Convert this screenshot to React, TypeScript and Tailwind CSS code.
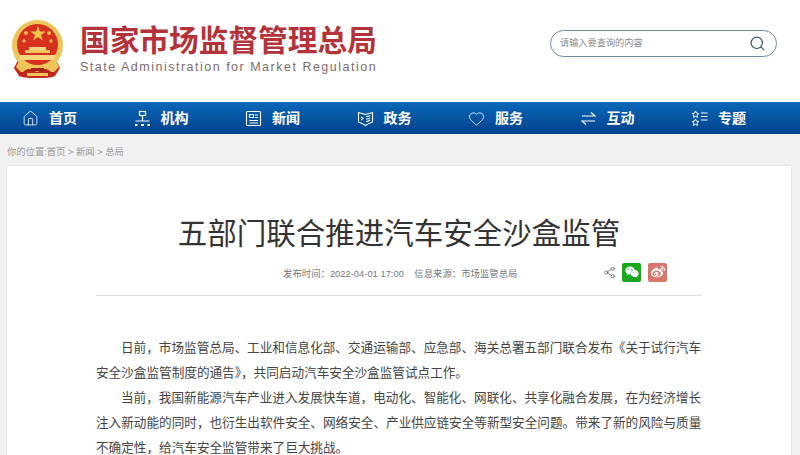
import React from 'react';
import { Home, Heart, Search, Share2 } from 'lucide-react';
import { FaWeixin, FaWeibo } from 'react-icons/fa';

const OrgIcon = () => (
  <svg width="17" height="17" viewBox="0 0 17 17" fill="none" stroke="currentColor" strokeWidth="1.2">
    <rect x="5.500" y="1.500" width="6" height="4" />
    <path d="M8.500 5.500V11M1.500 11h14" />
    <path d="M1 15h2.500M7 15h3M13.500 15H16" strokeWidth="2" />
  </svg>
);

const NewsIcon = () => (
  <svg width="17" height="17" viewBox="0 0 17 17" fill="none" stroke="currentColor" strokeWidth="1.100">
    <rect x="1.500" y="1.500" width="14" height="14" rx="1" />
    <path d="M4.500 4.500h4v3h-4zM10 5h3M10 7.500h3M4.500 10.500h8.500M4.500 13h8.500" />
  </svg>
);

const BookIcon = () => (
  <svg width="17" height="17" viewBox="0 0 17 17" fill="none" stroke="currentColor" strokeWidth="1.100">
    <path d="M1.500 2.500C4 3.500 6 3.500 8.500 4.500 11 3.500 13 3.500 15.500 2.500V12c-2.500 1-5 2-7 3.500-2-1.500-4.500-2.500-7-3.500z" />
    <path d="M9 6.500c1.500 0 3 0 4-1M9 9c1.500 0 3 0 4-1M9 11.500c1.500 0 3-.5 4-1.500M4 7l2 1.500L4 10" />
  </svg>
);

const SwapIcon = () => (
  <svg width="17" height="17" viewBox="0 0 17 17" fill="none" stroke="currentColor" strokeWidth="1.100">
    <path d="M2 6h13L11 2.500M15 11H2l4 3.500" />
  </svg>
);

const StarListIcon = () => (
  <svg width="17" height="17" viewBox="0 0 17 17" fill="none" stroke="currentColor" strokeWidth="1">
    <path d="M4.500 1l1 2.200 2.300.3-1.700 1.600.4 2.300-2-1.100-2 1.100.4-2.300L1.200 3.500l2.300-.3z" />
    <path d="M4.500 9l1 2.200 2.300.3-1.700 1.600.4 2.300-2-1.100-2 1.100.4-2.300-1.700-1.600 2.300-.3z" />
    <path d="M10 3h6.500M10 6.500h6.500M10 10h6.500" />
  </svg>
);

const navItems = [
  { label: '首页', icon: <Home size={17} strokeWidth={1.100} /> },
  { label: '机构', icon: <OrgIcon /> },
  { label: '新闻', icon: <NewsIcon /> },
  { label: '政务', icon: <BookIcon /> },
  { label: '服务', icon: <Heart size={17} strokeWidth={1.100} /> },
  { label: '互动', icon: <SwapIcon /> },
  { label: '专题', icon: <StarListIcon /> },
];

const Emblem = () => (
  <svg width="54" height="58" viewBox="0 0 54 58" className="mb-[4px] shrink-0">
    <path d="M8 40h38l4 8-5 8c-5 2-10 2-18 2s-13 0-18-2l-5-8z" fill="#c8281c" />
    <circle cx="27.500" cy="25.500" r="25.500" fill="#efc45a" />
    <circle cx="27.500" cy="24.500" r="20.500" fill="#d8301f" />
    <path d="M28 6l1.900 5.500h5.800l-4.700 3.400 1.800 5.500-4.800-3.400-4.800 3.400 1.800-5.500-4.700-3.400h5.800z" fill="#f4c64e" />
    <circle cx="16" cy="13" r="2" fill="#f2b84a" />
    <circle cx="39" cy="13" r="2" fill="#f2b84a" />
    <circle cx="14" cy="21" r="1.700" fill="#f2b84a" />
    <circle cx="41" cy="21" r="1.700" fill="#f2b84a" />
    <rect x="19" y="27" width="17" height="3" fill="#f6d57c" />
    <rect x="15" y="30" width="25" height="3" fill="#f3c75c" />
    <rect x="10" y="35" width="35" height="5" fill="#f6d57c" />
    <path d="M9 41c5 5 12 6 18.500 6S41 46 46 41l3 6-5 5H11l-5-5z" fill="#efc45a" />
    <path d="M13 52c3-3 6-4 9-2l5 2 5-2c3-2 6-1 9 2l-3 4H16z" fill="#b9261b" />
    <rect x="21" y="48" width="13" height="3" fill="#a52419" />
    <rect x="17" y="53" width="21" height="3" fill="#efc45a" />
  </svg>
);

export default function App() {
  return (
    <div className="w-[800px] h-[455px] overflow-hidden bg-[#f1f1f1] font-['Liberation_Sans','Noto_Sans_CJK_SC',sans-serif]">
      <header className="h-[102px] bg-white flex items-center justify-between pl-[10px] pr-[23px]">
        <div className="flex items-center gap-[16px]">
          <Emblem />
          <div className="mb-[3px]">
            <div className="text-[29.700px] leading-[34px] font-bold text-[#b4333a] whitespace-nowrap">国家市场监督管理总局</div>
            <div className="text-[12.500px] leading-[16px] tracking-[1.500px] text-[#7f6a6c] mt-[1px] whitespace-nowrap">State Administration for Market Regulation</div>
          </div>
        </div>
        <div className="w-[227px] h-[27px] mb-[15px] rounded-full border border-[#6f8ba3] flex items-center justify-between pl-[9px] pr-[10px]">
          <span className="text-[9.200px] text-[#8a8a8a]">请输入要查询的内容</span>
          <Search size={17} strokeWidth={1.600} className="text-[#33505f]" />
        </div>
      </header>
      <nav className="h-[32px] bg-gradient-to-b from-[#0b68b8] to-[#04418e] flex items-center pl-[22px]">
        {navItems.map((item) => (
          <div key={item.label} className="w-[111.500px] shrink-0 flex items-center gap-[10px] text-white">
            {item.icon}
            <span className="text-[14px] font-bold pt-[1px]">{item.label}</span>
          </div>
        ))}
      </nav>
      <div className="h-[31px] flex items-center pl-[7px] pt-[6px] text-[9.300px] text-[#9a9a9a]">你的位置:首页 &gt; 新闻 &gt; 总局</div>
      <main className="ml-[6px] w-[786px] h-[290px] bg-white border border-b-0 border-[#e8e8e8] flex flex-col items-center overflow-hidden">
        <h1 className="text-[29.500px] leading-[40px] text-[#333] mt-[48px] shrink-0">五部门联合推进汽车安全沙盒监管</h1>
        <div className="w-[606px] h-[42px] shrink-0 border-b border-[#dddddd] flex items-center justify-between pl-[187px] pr-[35px]">
          <span className="text-[9.400px] text-[#777]">发布时间：2022-04-01 17:00&nbsp;&nbsp;&nbsp;&nbsp;信息来源：市场监管总局</span>
          <div className="flex items-center gap-[6px] mb-[5px]">
            <Share2 size={13} strokeWidth={1.200} className="text-[#444]" />
            <span className="w-[19px] h-[19px] bg-[#1aa81f] rounded-[2px] flex items-center justify-center text-white">
              <FaWeixin size={14} />
            </span>
            <span className="w-[19px] h-[19px] ml-[1px] bg-[#d9756b] rounded-[2px] flex items-center justify-center text-white">
              <FaWeibo size={14} />
            </span>
          </div>
        </div>
        <article className="w-[606px] mt-[40px] text-[12.620px] leading-[25px] text-[#444]">
          <p className="indent-[25px]">日前，市场监管总局、工业和信息化部、交通运输部、应急部、海关总署五部门联合发布《关于试行汽车安全沙盒监管制度的通告》，共同启动汽车安全沙盒监管试点工作。</p>
          <p className="indent-[25px]">当前，我国新能源汽车产业进入发展快车道，电动化、智能化、网联化、共享化融合发展，在为经济增长注入新动能的同时，也衍生出软件安全、网络安全、产业供应链安全等新型安全问题。带来了新的风险与质量不确定性，给汽车安全监管带来了巨大挑战。</p>
        </article>
      </main>
    </div>
  );
}
